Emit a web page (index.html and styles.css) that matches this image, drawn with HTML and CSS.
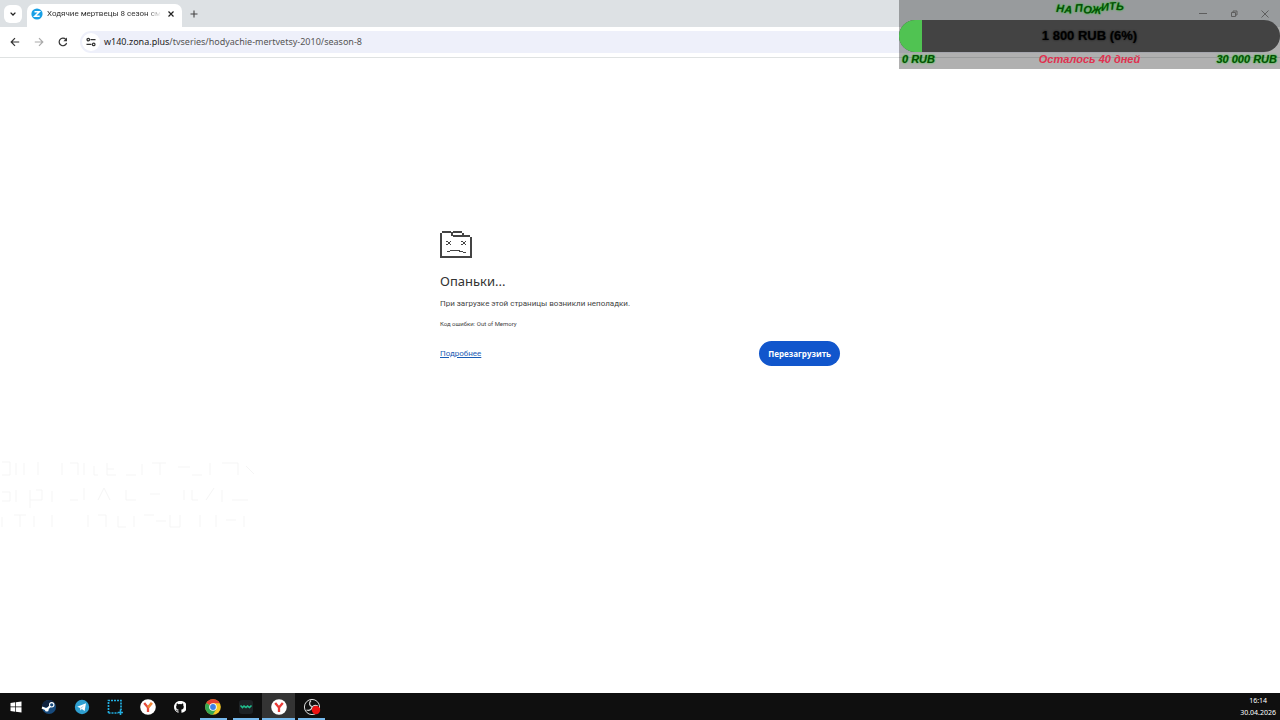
FILE: index.html
```
<!DOCTYPE html>
<html lang="ru">
<head>
    <meta charset="UTF-8">
    <meta name="viewport" content="width=device-width, initial-scale=1.0">
    <title>Ходячие мертвецы 8 сезон</title>
    <link rel="stylesheet" href="styles.css">
</head>
<body>
    <header class="browser">
        <div class="tab-strip">
            <button class="tab-search" aria-label="Поиск вкладок">
                <svg width="6" height="4" viewBox="0 0 6 4"><path d="M.6 .6 3 3 5.4 .6" fill="none" stroke="#222" stroke-width="1.3"/></svg>
            </button>
            <div class="tab">
                <svg width="12" height="12" viewBox="0 0 12 12"><circle cx="6" cy="6" r="5.6" fill="#18a0e6"/><path d="M3.5 3.8H8.3L3.8 8.2H8.7" fill="none" stroke="#fff" stroke-width="1.5"/></svg>
                <span class="tab-title">Ходячие мертвецы 8 сезон см</span>
                <button class="icon-btn" aria-label="Закрыть вкладку">
                    <svg width="6" height="6" viewBox="0 0 6 6"><path d="M.5 .5 5.5 5.5M5.5 .5 .5 5.5" stroke="#222" stroke-width="1.2"/></svg>
                </button>
            </div>
            <button class="icon-btn new-tab" aria-label="Новая вкладка">
                <svg width="8" height="8" viewBox="0 0 8 8"><path d="M4 .5V7.5M.5 4H7.5" stroke="#444" stroke-width="1.1"/></svg>
            </button>
            <div class="window-controls">
                <button class="icon-btn" aria-label="Свернуть">
                    <svg width="8" height="8" viewBox="0 0 8 8"><path d="M0 3.5H8" stroke="#888"/></svg>
                </button>
                <button class="icon-btn" aria-label="Развернуть">
                    <svg width="8" height="8" viewBox="0 0 8 8"><path d="M1.5 2.5H5.5V6.5H1.5ZM3 2.5V1H7V5H5.5" fill="none" stroke="#888"/></svg>
                </button>
                <button class="icon-btn" aria-label="Закрыть">
                    <svg width="8" height="8" viewBox="0 0 8 8"><path d="M.5 .5 7.5 7.5M7.5 .5 .5 7.5" stroke="#888"/></svg>
                </button>
            </div>
        </div>
        <div class="toolbar">
            <button class="icon-btn" aria-label="Назад">
                <svg width="10" height="10" viewBox="0 0 10 10"><path d="M9.2 5H1.4M5 1.2 1.2 5 5 8.8" fill="none" stroke="#333" stroke-width="1.2"/></svg>
            </button>
            <button class="icon-btn" aria-label="Вперёд">
                <svg width="10" height="10" viewBox="0 0 10 10"><path d="M.8 5H8.6M5 1.2 8.8 5 5 8.8" fill="none" stroke="#aaa" stroke-width="1.2"/></svg>
            </button>
            <button class="icon-btn" aria-label="Обновить">
                <svg width="10" height="10" viewBox="0 0 10 10"><path d="M8.6 6A3.8 3.8 0 1 1 7.8 2.4" fill="none" stroke="#333" stroke-width="1.2"/><path d="M5.4 4.2H9V.6Z" fill="#333"/></svg>
            </button>
            <div class="omnibox">
                <button class="site-info" aria-label="Сведения о сайте">
                    <svg width="10" height="10" viewBox="0 0 10 10"><g fill="none" stroke="#333" stroke-width="1.2"><path d="M4.5 2.6H9.5M.5 7.4H5.5"/><circle cx="2.3" cy="2.6" r="1.3"/><circle cx="7.7" cy="7.4" r="1.3"/></g></svg>
                </button>
                <a class="url" href="#"><b>w140.zona.plus</b>/tvseries/hodyachie-mertvetsy-2010/season-8</a>
            </div>
        </div>
    </header>

    <section class="goal">
        <svg class="goal-title" width="76" height="18" viewBox="0 0 76 18">
            <text x="4" y="11" dy="0 1 0 -1 1 0 -2 -1 0" rotate="3 5 0 -3 6 8 -4 -4 2">НА ПОЖИТЬ</text>
        </svg>
        <div class="goal-bar">
            <div class="goal-fill" style="width: 6%"></div>
            <span class="goal-value">1 800 RUB (6%)</span>
        </div>
        <div class="goal-row">
            <span>0 RUB</span>
            <span class="goal-left">Осталось 40 дней</span>
            <span>30 000 RUB</span>
        </div>
    </section>

    <main class="page">
        <div class="error">
            <svg class="sad-tab" width="32" height="27" viewBox="0 0 32 27" shape-rendering="crispEdges" fill="#444">
                <path d="M2 0H11V2H2ZM0 2H2V27H0ZM30 6H32V27H30ZM0 25H32V27H0ZM11 1H13V5H11ZM13 0H22V2H13ZM22 2H24V4H22ZM13 4H30V6H13Z"/>
                <path d="M6 10H8V11H6ZM10 10H11V11H10ZM8 11H10V13H8ZM6 13H8V14H6ZM10 13H11V14H10ZM21 10H23V11H21ZM25 10H26V11H25ZM23 11H25V13H23ZM21 13H23V14H21ZM25 13H26V14H25Z"/>
                <path d="M7 20H10V21H7ZM10 19H20V20H10ZM19 20H23V21H19ZM23 21H26V22H23Z"/>
            </svg>
            <h1>Опаньки...</h1>
            <p class="message">При загрузке этой страницы возникли неполадки.</p>
            <p class="code">Код ошибки: Out of Memory</p>
            <div class="actions">
                <a href="#">Подробнее</a>
                <button class="reload">Перезагрузить</button>
            </div>
        </div>
        <svg class="ghost" width="256" height="72" viewBox="0 0 256 72" fill="none" stroke="#f5f5f5">
            <path d="M2 4H10V17H2M16 5V17M24 5V17M38 4V17M62 5V17M70 5H78V17M84 5V17M94 8V17H98M107 5V17H116M107 11H114M126 17H136M142 6V17M152 5H166M160 5V17M178 9H190M192 17H202M210 5V17M222 5H238V17M246 8 254 16"/>
            <path d="M2 34H10V43H2M16 32V44M30 32V50M36 32H42V42H30M52 33V44M70 42H78M84 30V42M98 42 104 30 110 42M126 32V42H136M150 36H160M184 32V42M192 32V42H198M206 42 214 30M222 32V44M232 42H248"/>
            <path d="M2 59V69M14 57H26M20 57V69M34 58V69M52 57V69M88 57V69M98 57H106V69M118 58V69H126M134 58V69M144 57H154M156 63H166M170 57V69H180V57M200 57V69M216 57V69M226 62H236M244 58V69"/>
        </svg>
    </main>

    <footer class="taskbar">
        <nav class="apps">
            <button aria-label="Пуск">
                <svg width="12" height="12" viewBox="0 0 12 12" fill="#fff"><path d="M.5 2 5.2 1.3V5.6H.5ZM5.9 1.2 11.5 .4V5.6H5.9ZM.5 6.3H5.2V10.7L.5 10ZM5.9 6.3H11.5V11.6L5.9 10.8Z"/></svg>
            </button>
            <button aria-label="Steam">
                <svg width="16" height="16" viewBox="0 0 16 16"><circle cx="8" cy="8" r="7" fill="#174a7c"/><path d="M1 8A7 7 0 0 1 14 4.5L8 8Z" fill="#10233f"/><path d="M1 8.5 5.6 10.5 10.5 6" fill="none" stroke="#fff" stroke-width="2.2"/><circle cx="10.7" cy="5.8" r="2.2" fill="#174a7c" stroke="#fff" stroke-width="1.1"/><circle cx="5.8" cy="10.7" r="1.9" fill="#fff"/></svg>
            </button>
            <button aria-label="Telegram">
                <svg width="16" height="16" viewBox="0 0 16 16"><circle cx="8" cy="8" r="7.2" fill="#2f9fd0"/><path d="M3.2 7.8 12 4.3 10.6 12 7.8 10 6.4 11.4 6.1 8.9Z" fill="#fff"/><path d="M6.3 8.9 10.5 5.9 7.3 9.5" fill="#9dcbe4"/></svg>
            </button>
            <button aria-label="Снимок экрана">
                <svg width="16" height="16" viewBox="0 0 16 16" fill="none" stroke="#22aee0"><path d="M1.5 14V1.5H14V11M1.5 14H11" stroke-width="1.7" stroke-dasharray="2 1"/><path d="M13.5 10.5V16M10.8 13.5H16" stroke-width="1.6"/></svg>
            </button>
            <button aria-label="Яндекс">
                <svg width="16" height="16" viewBox="0 0 16 16"><circle cx="8" cy="8" r="7.8" fill="#fff"/><path d="M8 13V8.6L4.2 4M8 8.6 11.8 4" fill="none" stroke="#e64a3c" stroke-width="2.3"/><path d="M8 8.6 11.8 4" stroke="#ef8a35" stroke-width="2.3"/></svg>
            </button>
            <button aria-label="GitHub">
                <svg width="12" height="12" viewBox="0 0 16 16" fill="#fff"><path d="M8 0C3.58 0 0 3.58 0 8c0 3.54 2.29 6.53 5.47 7.59.4.07.55-.17.55-.38V13.8c-2.2.4-2.7-.9-2.7-.9-.5-1-1-1.2-1-1.2-.7-.5 0-.5 0-.5.8.1 1.3.9 1.3.9.7 1.2 1.9.9 2.3.7.1-.5.3-.9.5-1.1-1.8-.2-3.6-.9-3.6-3.9 0-.9.3-1.6.8-2.2-.1-.2-.4-1 .1-2.1 0 0 .7-.2 2.2.8a7.6 7.6 0 0 1 4 0c1.5-1 2.2-.8 2.2-.8.5 1.1.2 1.9.1 2.1.5.6.8 1.3.8 2.2 0 3-1.9 3.7-3.6 3.9.3.3.5.8.5 1.5v2.2c0 .2.1.5.6.4A8 8 0 0 0 8 0Z"/></svg>
            </button>
            <button class="running" aria-label="Chrome">
                <svg width="16" height="16" viewBox="0 0 16 16"><circle cx="8" cy="8" r="7.8" fill="#f7c927"/><path d="M8 8 1.2 4.1A7.8 7.8 0 0 1 14.8 4.2H8Z" fill="#e44134"/><path d="M8 8 1.2 4.1A7.8 7.8 0 0 0 7.8 15.8L11.3 10Z" fill="#35a853"/><circle cx="8" cy="8" r="3.8" fill="#fff"/><circle cx="8" cy="8" r="2.9" fill="#3d80e8"/></svg>
            </button>
            <button class="running" aria-label="Монитор">
                <svg width="14" height="14" viewBox="0 0 14 14"><rect x="0" y="0" width="14" height="14" rx="3" fill="#1d2225"/><path d="M1.5 5.5 3.5 7.5 5 6 7 7.5 8.5 6 10.5 7.5 12.5 5.5" fill="none" stroke="#20bd8c" stroke-width="1.6"/></svg>
            </button>
            <button class="running active" aria-label="Яндекс Браузер">
                <svg width="16" height="16" viewBox="0 0 16 16"><circle cx="8" cy="8" r="7.8" fill="#fff"/><path d="M8 13V8.6L4.2 4" fill="none" stroke="#e93a36" stroke-width="2.3"/><path d="M8 8.6 11.8 4" stroke="#e93a36" stroke-width="2.3"/></svg>
            </button>
            <button class="running" aria-label="OBS">
                <svg width="18" height="18" viewBox="0 0 18 18"><circle cx="9" cy="9" r="7.6" fill="#111" stroke="#ddd"/><path d="M8 2.5C5.5 5 6.5 8 9 8.5M14.8 8C11.5 6.5 9 8 9 10.5M3.5 12C6.5 13 9 11.5 9 8.8" fill="none" stroke="#ddd" stroke-width="1.2"/><circle cx="13" cy="12" r="4.2" fill="#ed1111"/></svg>
            </button>
        </nav>
        <div class="clock">
            <time>16:14</time>
            <time>30.04.2026</time>
        </div>
    </footer>
</body>
</html>
```
FILE: styles.css
```
* {
    margin: 0;
    padding: 0;
    box-sizing: border-box;
}

body {
    font-family: 'Noto Sans', 'Open Sans', sans-serif;
    background: #fff;
    min-height: 100vh;
    display: flex;
    flex-direction: column;
    color: #333;
}

button {
    font-family: inherit;
    border: none;
    background: none;
    cursor: pointer;
}

svg {
    display: block;
    flex-shrink: 0;
}

/* Browser chrome */
.tab-strip {
    display: flex;
    align-items: center;
    height: 27px;
    padding-left: 4px;
    background: #dde1e4;
}

.tab-search {
    display: flex;
    align-items: center;
    justify-content: center;
    width: 18px;
    height: 18px;
    border-radius: 6px;
    background: #fff;
}

.tab {
    display: flex;
    align-items: center;
    align-self: flex-end;
    gap: 4px;
    width: 155px;
    height: 23px;
    margin-left: 5px;
    padding: 0 4px 4px 4px;
    border-radius: 7px 7px 0 0;
    background: #fff;
}

.tab-title {
    flex: 1;
    white-space: nowrap;
    font-family: Roboto, sans-serif;
    font-size: 8px;
    line-height: 12px;
    mask-image: linear-gradient(to right, #000 88%, transparent);
}

.icon-btn {
    display: flex;
    align-items: center;
    justify-content: center;
    width: 14px;
    height: 16px;
}

.new-tab {
    margin-left: 5px;
}

.window-controls {
    display: flex;
    gap: 17px;
    margin-left: auto;
    padding-right: 8px;
}

.toolbar {
    display: flex;
    align-items: center;
    gap: 10px;
    height: 31px;
    padding: 0 8px;
    border-bottom: 1px solid #dfe2e2;
}

.omnibox {
    display: flex;
    align-items: center;
    flex: 1;
    gap: 4px;
    height: 22px;
    padding: 0 2px;
    border-radius: 11px;
    background: #eef0fa;
}

.site-info {
    display: flex;
    align-items: center;
    justify-content: center;
    width: 18px;
    height: 18px;
    border-radius: 50%;
    background: #fff;
}

.url {
    font-size: 9px;
    line-height: 14px;
    color: #555;
    text-decoration: none;
}

.url b {
    font-weight: 400;
    color: #222;
}

/* Donation goal overlay */
.goal {
    position: absolute;
    top: 0;
    right: 0;
    width: 381px;
    background: rgba(0, 0, 0, 0.31);
    font-family: 'Liberation Sans', Arial, sans-serif;
    font-weight: 700;
}

.goal-title {
    height: 20px;
    margin: 0 auto;
    overflow: visible;
    font-size: 11px;
    font-style: italic;
    fill: #064d06;
    text-shadow: 0 0 2px #0c0;
}

.goal-bar {
    position: relative;
    display: flex;
    align-items: center;
    justify-content: center;
    height: 32px;
    border-radius: 16px;
    overflow: hidden;
    background: #434343;
}

.goal-fill {
    position: absolute;
    left: 0;
    top: 0;
    bottom: 0;
    background: #50c352;
}

.goal-value {
    font-size: 13px;
    line-height: 16px;
    color: #000;
    text-shadow: 0 0 2px #111;
}

.goal-row {
    display: grid;
    grid-template-columns: 1fr auto 1fr;
    height: 17px;
    padding: 0 3px;
    font-size: 11px;
    line-height: 14px;
    font-style: italic;
    color: #064d06;
    text-shadow: 0 0 2px #0c0;
}

.goal-row span:last-child {
    text-align: right;
}

.goal-row .goal-left {
    color: #e0304f;
    text-shadow: none;
}

/* Crash page */
.page {
    position: relative;
    flex: 1;
}

.error {
    width: 100%;
    max-width: 400px;
    margin: 0 auto;
    padding-top: 173px;
}

.error h1 {
    margin-top: 13px;
    font-size: 13px;
    font-weight: 400;
    line-height: 20px;
}

.message {
    margin-top: 7px;
    font-family: Roboto, sans-serif;
    font-size: 8px;
    line-height: 12px;
    color: #444;
}

.code {
    margin-top: 8px;
    font-family: Roboto, sans-serif;
    font-size: 6px;
    line-height: 12px;
    color: #444;
}

.actions {
    display: flex;
    align-items: center;
    justify-content: space-between;
    margin-top: 11px;
}

.actions a {
    font-family: Roboto, sans-serif;
    font-size: 8px;
    line-height: 12px;
    color: #1a5cb5;
}

.reload {
    height: 25px;
    padding: 0 9px;
    border-radius: 13px;
    background: #1156cc;
    color: #fff;
    font-family: 'Open Sans', sans-serif;
    font-size: 8px;
    font-weight: 700;
}

.ghost {
    position: absolute;
    left: 0;
    bottom: 163px;
}

/* Taskbar */
.taskbar {
    display: flex;
    justify-content: space-between;
    height: 27px;
    background: #0f0f0f;
}

.apps {
    display: grid;
    grid-template-columns: repeat(10, 1fr);
    width: 328px;
}

.apps button {
    display: flex;
    align-items: center;
    justify-content: center;
    border-bottom: 2px solid transparent;
    border-top: 2px solid transparent;
}

.apps .running {
    border-bottom-color: #76b9ed;
    margin: 0 3px;
}

.apps .active {
    margin: 0;
    background: #343434;
}

.clock {
    display: flex;
    flex-direction: column;
    align-items: center;
    padding: 2px 4px 0 0;
    font-size: 7px;
    line-height: 12px;
    color: #fff;
}
```
